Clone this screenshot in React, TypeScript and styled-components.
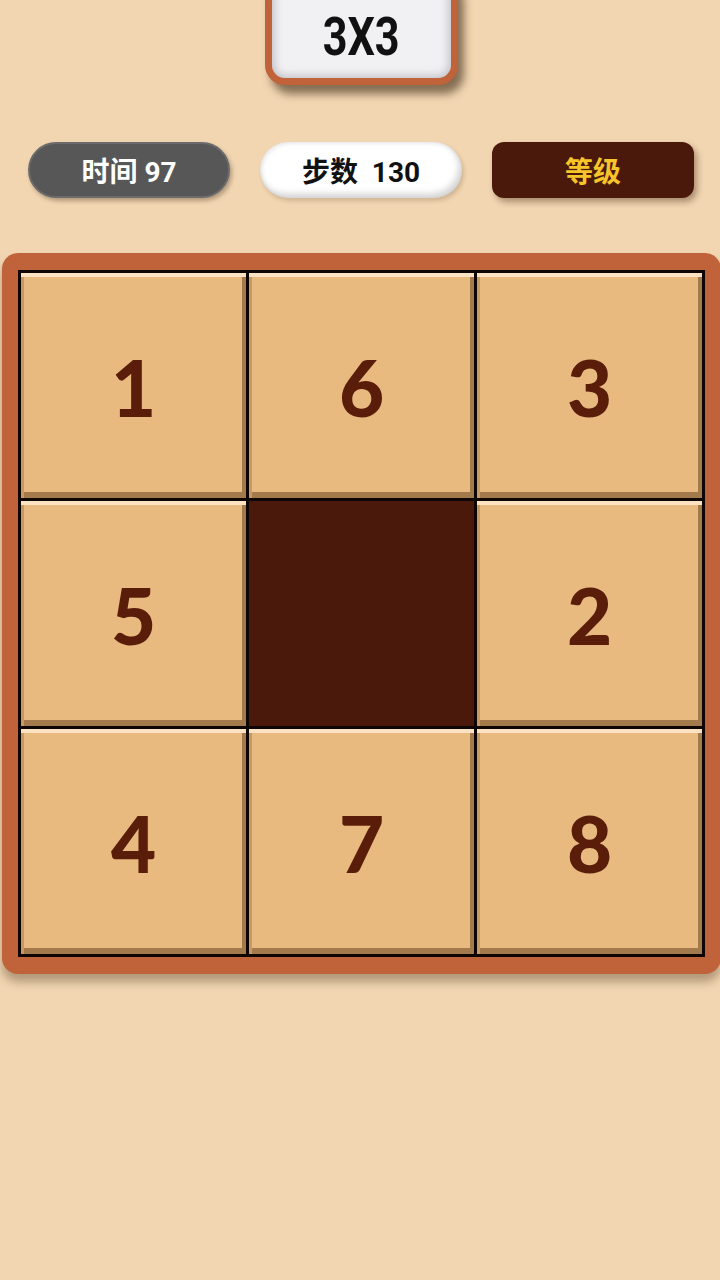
import React from "react";
import styled, { createGlobalStyle } from "styled-components";

const Global = createGlobalStyle`
  html, body { margin: 0; padding: 0; background: #f2d6b2; }
  body { font-family: "Lato", "Noto Sans CJK SC", sans-serif; overflow: hidden; }
  #root { min-height: 1280px; }
`;

const Page = styled.div`
  width: 720px;
  height: 1280px;
  background: #f2d6b2;
  display: flex;
  flex-direction: column;
  align-items: center;
  overflow: hidden;
`;

const TitleBox = styled.div`
  margin-top: -26px;
  margin-left: 2px;
  width: 179px;
  height: 87px;
  border: 7px solid #c1633a;
  border-radius: 20px;
  background: #f1f1f3;
  box-shadow: inset 0 0 8px 2px rgba(90, 90, 110, 0.35), 6px 9px 9px rgba(60, 40, 20, 0.6);
  display: flex;
  align-items: flex-end;
  justify-content: center;
  padding-bottom: 10px;
  box-sizing: content-box;
`;

const TitleText = styled.span`
  font-family: "Roboto", "Liberation Sans", sans-serif;
  font-weight: 700;
  font-size: 54px;
  line-height: 62px;
  color: #111;
  display: inline-block;
  transform: scaleX(0.8);
`;

const InfoRow = styled.div`
  margin-top: 57px;
  width: 666px;
  margin-left: 2px;
  display: flex;
  justify-content: space-between;
`;

const Pill = styled.div<{ $variant: "gray" | "white" | "brown" }>`
  width: 202px;
  height: 56px;
  box-sizing: border-box;
  display: flex;
  align-items: center;
  justify-content: center;
  font-family: "Roboto", "Noto Sans CJK SC", sans-serif;
  font-weight: 700;
  font-size: 28px;
  white-space: pre;
  border-radius: ${(p) => (p.$variant === "brown" ? "12px" : "28px")};
  background: ${(p) =>
    p.$variant === "gray" ? "#575757" : p.$variant === "white" ? "#ffffff" : "#4b190b"};
  color: ${(p) =>
    p.$variant === "gray" ? "#ffffff" : p.$variant === "white" ? "#111111" : "#f6c529"};
  border: ${(p) => (p.$variant === "gray" ? "2px solid #6b6b6b" : "none")};
  box-shadow: ${(p) =>
    p.$variant === "white"
      ? "inset -3px -4px 7px rgba(0,0,0,0.18), inset 2px 2px 4px rgba(0,0,0,0.08), 2px 3px 4px rgba(80,50,20,0.2)"
      : p.$variant === "gray"
      ? "2px 3px 4px rgba(60,40,20,0.35)"
      : "3px 4px 6px rgba(60,30,10,0.4)"};
`;

const Frame = styled.div`
  margin-top: 55px;
  align-self: flex-start;
  margin-left: 2px;
  width: 719px;
  box-sizing: border-box;
  padding: 17px 16px 17px 16px;
  background: #c1633a;
  border-radius: 16px;
  box-shadow: 0 8px 10px rgba(60, 40, 20, 0.35);
`;

const Grid = styled.div`
  display: grid;
  grid-template-columns: repeat(3, 225px);
  grid-auto-rows: 225px;
  gap: 3px;
  padding: 3px;
  background: #0d0604;
  width: max-content;
`;

const Tile = styled.div`
  background: #e9ba80;
  display: flex;
  align-items: center;
  justify-content: center;
  box-shadow: inset 0 4px 0 #fbe2c3, inset 3px 0 0 #c79a64, inset -4px 0 0 #a37a4c,
    inset 0 -6px 0 #a37a4c;
  font-family: "Lato", sans-serif;
  font-weight: 900;
  font-size: 78px;
  color: #5a1d0a;
  line-height: 1;
  padding-top: 2px;
`;

const Empty = styled.div`
  background: #4a190b;
`;

const tiles = [1, 6, 3, 5, 0, 2, 4, 7, 8];

export default function App() {
  return (
    <>
      <Global />
      <Page>
        <TitleBox>
          <TitleText>3X3</TitleText>
        </TitleBox>
        <InfoRow>
          <Pill $variant="gray">时间 97</Pill>
          <Pill $variant="white">步数  130</Pill>
          <Pill $variant="brown">等级</Pill>
        </InfoRow>
        <Frame>
          <Grid>
            {tiles.map((n, i) =>
              n === 0 ? <Empty key={i} /> : <Tile key={i}>{n}</Tile>
            )}
          </Grid>
        </Frame>
      </Page>
    </>
  );
}
